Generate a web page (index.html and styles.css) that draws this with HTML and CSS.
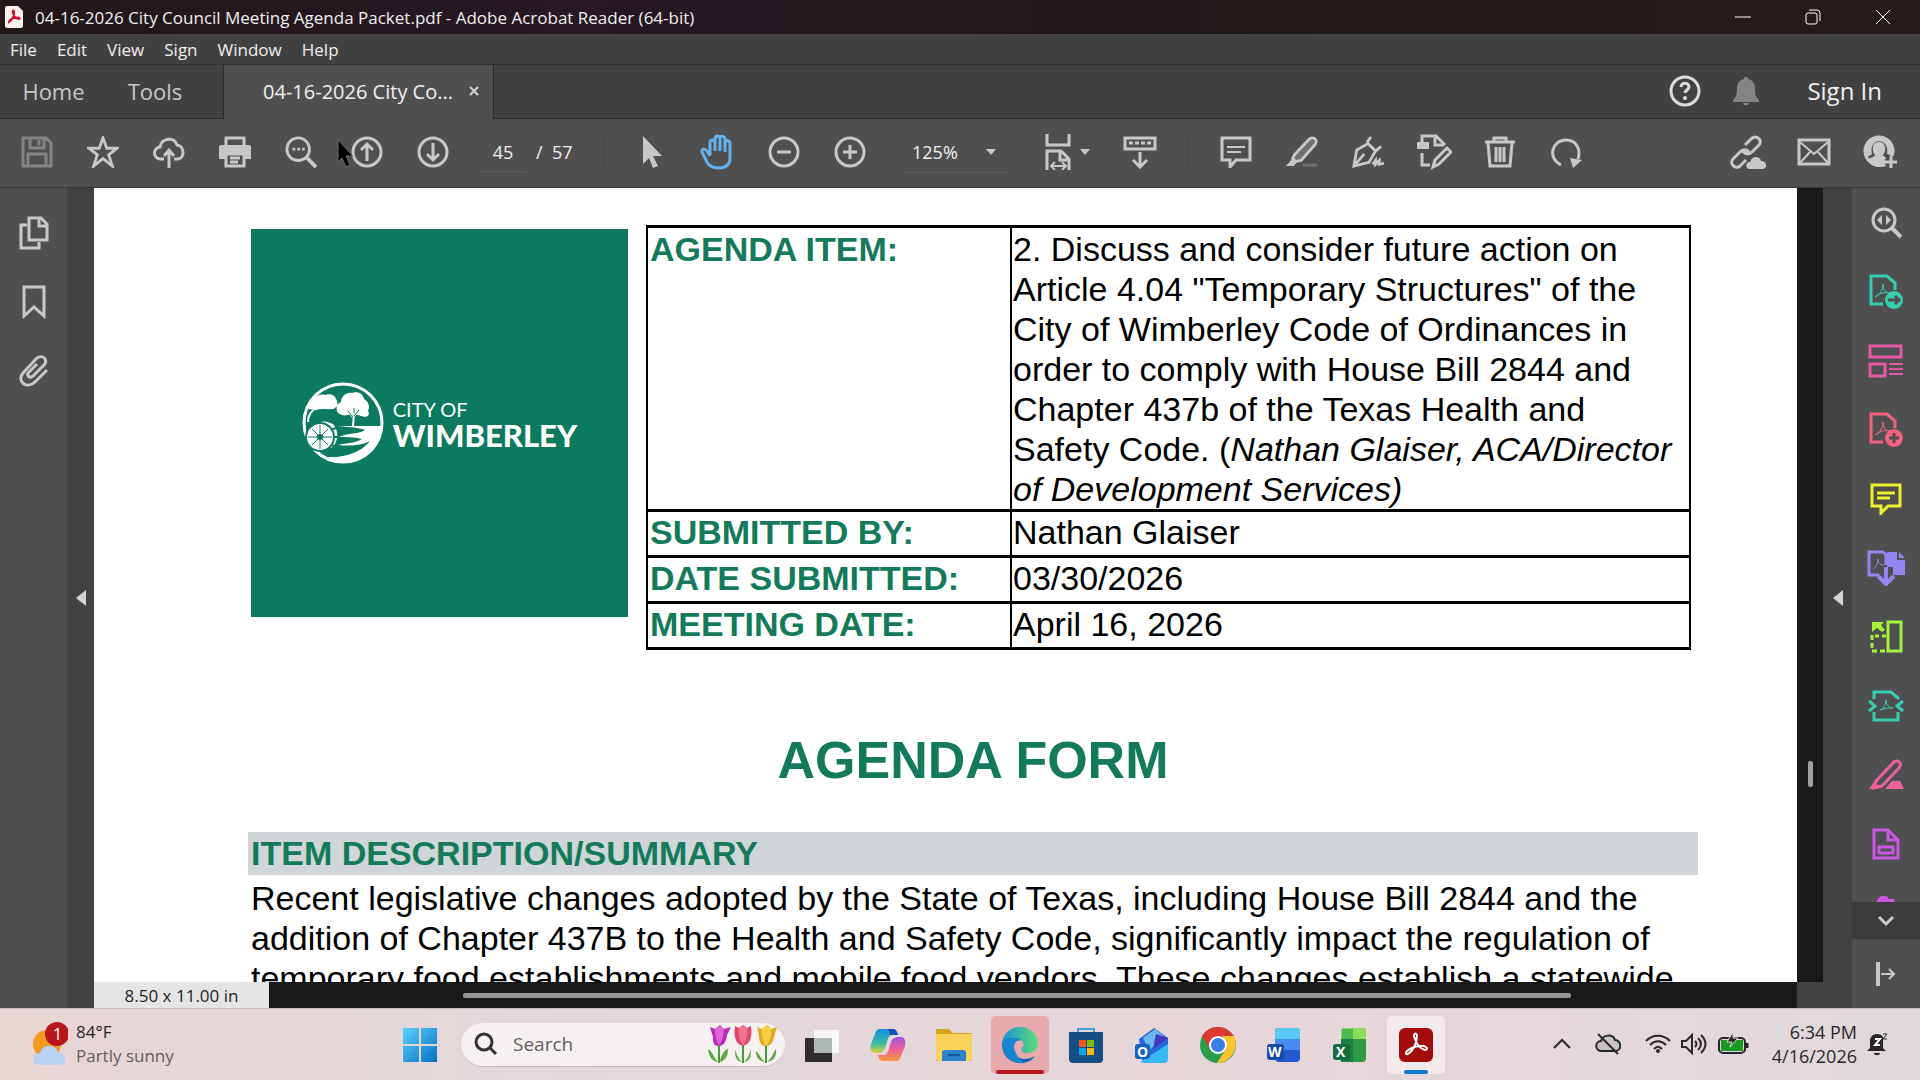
FILE: index.html
```html
<!DOCTYPE html>
<html lang="en">
<head>
    <meta charset="UTF-8">
    <meta name="viewport" content="width=device-width, initial-scale=1.0">
    <title>04-16-2026 City Council Meeting Agenda Packet.pdf - Adobe Acrobat Reader (64-bit)</title>
    <link rel="stylesheet" href="styles.css">
</head>
<body>
    <header class="title-bar">
        <svg class="app-icon" width="18" height="22" viewBox="0 0 18 22"><path d="M2 0h11l5 5v15a2 2 0 0 1-2 2H2a2 2 0 0 1-2-2V2a2 2 0 0 1 2-2z" fill="#fff0f0"/><path d="M4 16c3-2 5-6 5-10 0-2-2-2-1 1 1 4 3 6 6 6 2-1-1-2-4-1-3 0-6 2-6 4z" fill="none" stroke="#c8102e" stroke-width="2"/></svg>
        <span class="window-title">04-16-2026 City Council Meeting Agenda Packet.pdf - Adobe Acrobat Reader (64-bit)</span>
        <div class="window-buttons">
            <button aria-label="Minimize"><svg width="16" height="16" viewBox="0 0 16 16"><path d="M0 8h16"/></svg></button>
            <button aria-label="Restore"><svg width="16" height="16" viewBox="0 0 16 16"><rect x="1" y="4" width="11" height="11" rx="2"/><path d="M4 1h8a3 3 0 0 1 3 3v8"/></svg></button>
            <button aria-label="Close"><svg width="16" height="16" viewBox="0 0 16 16"><path d="M1 1l14 14M15 1L1 15"/></svg></button>
        </div>
    </header>

    <nav class="menu-bar">
        <button>File</button>
        <button>Edit</button>
        <button>View</button>
        <button>Sign</button>
        <button>Window</button>
        <button>Help</button>
    </nav>

    <div class="tab-bar">
        <button class="tab tab-home">Home</button>
        <button class="tab tab-tools">Tools</button>
        <div class="doc-tab">
            <span>04-16-2026 City Co...</span>
            <button aria-label="Close tab"><svg width="10" height="10" viewBox="0 0 10 10"><path d="M1 1l8 8M9 1L1 9" stroke="#d4d3d4" stroke-width="2"/></svg></button>
        </div>
        <div class="account">
            <button aria-label="Help"><svg class="icon" width="32" height="32" viewBox="0 0 32 32"><circle cx="16" cy="16" r="14" stroke-width="3"/><path d="M12 12c0-5 8-5 8 0 0 3-4 3-4 6" stroke-width="3"/><circle cx="16" cy="23" r="2" class="solid"/></svg></button>
            <button aria-label="Notifications"><svg width="26" height="30" viewBox="0 0 26 30"><path d="M11 1h4v2c5 1 7 5 7 10 0 6 1 8 4 11v2H0v-2c3-3 4-5 4-11C4 8 6 4 11 3zM10 27h6c0 3-6 3-6 0z" fill="#858485"/></svg></button>
            <button class="sign-in">Sign In</button>
        </div>
    </div>

    <div class="toolbar">
        <button class="tool dim" aria-label="Save"><svg class="icon" viewBox="0 0 32 32"><path d="M2 2h23l5 5v23H2zM9 2v10h14V2M7 30V18h18v12M18 4v5"/></svg></button>
        <button class="tool" aria-label="Star"><svg class="icon" viewBox="0 0 34 34"><path d="M17 2l4 11h11l-9 7 4 12-10-8-10 8 4-12-9-7h11z"/></svg></button>
        <button class="tool" aria-label="Upload"><svg class="icon" viewBox="0 0 32 32"><path d="M11 23H8A6 6 0 0 1 7 11C8 2 22 0 24 9c8 1 8 14 0 14h-3M16 32V15M11 20l5-6 5 6"/></svg></button>
        <button class="tool" aria-label="Print"><svg class="icon" viewBox="0 0 32 32"><path d="M7 9V2h18v7"/><path d="M2 9h28a2 2 0 0 1 2 2v12h-6v-6H6v6H0V11a2 2 0 0 1 2-2z" class="solid"/><path d="M7 18h18v12H7zM11 22h10M11 26h8"/></svg></button>
        <button class="tool" aria-label="Find"><svg class="icon" viewBox="0 0 34 34"><circle cx="14" cy="14" r="12"/><path d="M23 23l10 10" stroke-width="4"/><path d="M8 14h3M13 14h3M18 14h3"/></svg></button>
        <button class="tool" aria-label="Previous page"><svg class="icon" viewBox="0 0 32 32"><circle cx="16" cy="16" r="14"/><path d="M16 25V9M10 14l6-6 6 6"/></svg></button>
        <button class="tool" aria-label="Next page"><svg class="icon" viewBox="0 0 32 32"><circle cx="16" cy="16" r="14"/><path d="M16 7v16M10 18l6 6 6-6"/></svg></button>
        <div class="page-box">
            <input type="text" value="45" aria-label="Page number">
            <span>/&nbsp; 57</span>
        </div>
        <span class="divider"></span>
        <button class="tool" aria-label="Select"><svg class="icon" viewBox="0 0 32 32"><path d="M7 0l19 20h-9l5 10-5 2-4-10-6 6z" class="solid"/></svg></button>
        <button class="tool active" aria-label="Hand"><svg class="icon" width="36" height="36" viewBox="0 0 36 36"><path d="M10 21V9c0-4 5-4 5 0v8V5c0-4 5-4 5 0v12V5c0-4 5-3 5 0v13-9c0-4 5-3 5 1v14c0 7-5 10-12 10C10 34 7 30 5 24l-3-6c-1-3 3-4 5-1l3 5"/></svg></button>
        <button class="tool" aria-label="Zoom out"><svg class="icon" viewBox="0 0 32 32"><circle cx="16" cy="16" r="14"/><path d="M9 16h14"/></svg></button>
        <button class="tool" aria-label="Zoom in"><svg class="icon" viewBox="0 0 32 32"><circle cx="16" cy="16" r="14"/><path d="M9 16h14M16 9v14"/></svg></button>
        <div class="zoom-box">
            <select aria-label="Zoom level">
                <option>125%</option>
            </select>
        </div>
        <button class="tool fit" aria-label="Fit width"><svg class="icon" width="28" height="36" viewBox="0 0 28 36"><path d="M3 0v11h22V0M3 36V17h14l8 8v11M16 17v9h9"/><path d="M8 32h13M11 28l-4 4 4 4M18 28l4 4-4 4" stroke-width="2"/></svg><span class="caret"></span></button>
        <button class="tool" aria-label="Page display"><svg class="icon" width="34" height="34" viewBox="0 0 34 34"><path d="M2 3h30v11H2zM17 17v14M10 25l7 7 7-7"/><path d="M6 8h4M12 8h4M18 8h4M24 8h4"/></svg></button>
        <span class="divider"></span>
        <button class="tool" aria-label="Comment"><svg class="icon" viewBox="0 0 32 32"><path d="M2 2h28v22H16l-6 7v-7H2z"/><path d="M7 11h18M7 16h14" stroke-width="2"/></svg></button>
        <button class="tool" aria-label="Highlight"><svg class="icon" viewBox="0 0 34 34"><path d="M9 20L24 4c4-5 11 0 7 5L16 26l-6 1-3-3z" fill="#717071"/><path d="M0 32l6-7 5 4-3 3z" class="solid"/><path d="M18 31h15" stroke="#717071"/></svg></button>
        <button class="tool" aria-label="Sign"><svg class="icon" viewBox="0 0 34 34"><path d="M2 32l3-17 12-7 8 8-7 12zM2 32l11-13M16 7l4-6M25 16l6-5M22 30l3-4v4l4-4v4l5-1"/></svg></button>
        <button class="tool" aria-label="Edit"><svg class="icon" width="36" height="36" viewBox="0 0 36 36"><path d="M6 8V2h14l9 9M19 2v9h9M6 19v12h8"/><path d="M1 8h12v7H1z" class="solid"/><path d="M17 33l2-7 12-12 4 4-12 12z"/></svg></button>
        <button class="tool" aria-label="Delete"><svg class="icon" viewBox="0 0 32 32"><path d="M1 6h30M10 6V2h12v4M4 7l2 23h20l2-23M12 11v15M16 11v15M20 11v15"/></svg></button>
        <button class="tool" aria-label="Rotate"><svg class="icon" viewBox="0 0 32 32"><path d="M11 29C-3 22 2 4 16 4c11 0 15 10 12 19"/><path d="M20 22l12 2-9 8z" class="solid"/></svg></button>
        <div class="share-tools">
            <button class="tool" aria-label="Share link"><svg class="icon" width="36" height="34" viewBox="0 0 36 34"><path d="M15 10l6-6c6-5 12 2 8 6l-7 7c-4 4-9 1-9-2M19 19c0-4-5-6-9-2l-7 7c-4 4 2 11 7 7l6-6"/><path d="M20 34c-5 0-5-7 0-7 2-7 10-6 11-1 7 0 6 8 2 8z" class="solid"/></svg></button>
            <button class="tool" aria-label="Email"><svg class="icon" width="34" height="28" viewBox="0 0 34 28"><path d="M2 2h30v24H2z"/><path d="M3 4l14 12L31 4M3 25l10-11M31 25L21 14" stroke-width="2"/></svg></button>
            <button class="tool" aria-label="Add person"><svg class="icon" width="34" height="34" viewBox="0 0 34 34"><circle cx="16" cy="16" r="14"/><path d="M4 25c2-3 7-2 8-5-3-3-4-13 4-13s7 10 4 13c1 2 3 2 3 3v8C17 33 9 33 4 25zM2 16C2-3 30-3 30 16l-1 5-5-2C27 2 5 2 9 19l-6 4z" class="solid"/><path d="M28 21v12M22 27h12" stroke="#504f50" stroke-width="6"/><path d="M28 21v12M22 27h12"/></svg></button>
        </div>
    </div>

    <main class="workspace">
        <nav class="left-rail">
            <button class="rail-btn" aria-label="Page thumbnails"><svg class="icon" width="30" height="34" viewBox="0 0 30 34"><path d="M10 2h12l6 6v16H10zM20 2v8h8M8 9H2v23h18v-6"/></svg></button>
            <button class="rail-btn" aria-label="Bookmarks"><svg class="icon" width="24" height="34" viewBox="0 0 24 34"><path d="M2 2h20v29l-10-9-10 9z"/></svg></button>
            <button class="rail-btn" aria-label="Attachments"><svg class="icon" width="30" height="32" viewBox="0 0 30 32"><path d="M28 15L16 27C8 35-3 26 4 18L17 4c6-6 13 1 8 6L14 21c-4 3-7-1-4-4l8-8"/></svg></button>
        </nav>
        <button class="collapse" aria-label="Expand navigation pane"><span class="arrow-left"></span></button>

        <section class="viewer">
            <div class="page">
                <div class="page-head">
                    <div class="city-logo">
                        <svg width="82" height="82" viewBox="0 0 82 82">
                            <circle cx="41" cy="41" r="39" fill="none" stroke="#fff" stroke-width="3"/>
                            <path d="M7 25c3-8 9-14 16-12 5-2 10 0 11 4 3 4 1 9-3 10-7 1-12-1-17 1l-8-1zM36 31c-3-6-1-9 3-11 0-6 6-10 11-9 6-2 11 1 12 6 5 3 6 8 4 12 3 5-2 7-7 5-5-2-8-2-13-1-4 1-7 0-10-2z" fill="#fff"/>
                            <path d="M51 44l1-13M51 35l-5-6M52 34l5-6M51 30v-5M6 40c0-7 3-11 8-14" fill="none" stroke="#fff" stroke-width="2"/>
                            <path d="M51 35l-5-6M52 34l5-6M52 31v-5" fill="none" stroke="#0c7a5e" stroke-width="1"/>
                            <path d="M36 44h44c0 19-14 34-32 36-8 2-17 1-24-5 17 1 35-4 44-16-10 5-20 5-32 4 9-2 18-2 24-6-8-2-16-2-23-2 8-4 21-3 26-7-8-3-18-3-27-4z" fill="#fff"/>
                            <path d="M14 43c5-5 12-4 18 0 5 8 4 15-1 22l-15 4z" fill="#fff"/>
                            <circle cx="18" cy="55" r="14" fill="#fff" stroke="#0c7a5e" stroke-width="2"/>
                            <path d="M18 43v24M6 55h24M10 47l16 16M10 63l16-16" stroke="#0c7a5e" stroke-width="1"/>
                            <circle cx="18" cy="55" r="3" fill="#0c7a5e"/>
                            <path d="M29 48l5-2M32 55h5M29 63l6 2" stroke="#0c7a5e" stroke-width="2"/>
                        </svg>
                        <div class="city-name">
                            <span>CITY OF</span>
                            <strong>WIMBERLEY</strong>
                        </div>
                    </div>
                    <table class="agenda-table">
                        <tr class="agenda-row">
                            <th>AGENDA ITEM:</th>
                            <td>2. Discuss and consider future action on<br>Article 4.04 "Temporary Structures" of the<br>City of Wimberley Code of Ordinances in<br>order to comply with House Bill 2844 and<br>Chapter 437b of the Texas Health and<br>Safety Code. (<i>Nathan Glaiser, ACA/Director<br>of Development Services)</i></td>
                        </tr>
                        <tr><th>SUBMITTED BY:</th><td>Nathan Glaiser</td></tr>
                        <tr><th>DATE SUBMITTED:</th><td>03/30/2026</td></tr>
                        <tr><th>MEETING DATE:</th><td>April 16, 2026</td></tr>
                    </table>
                </div>
                <h1>AGENDA FORM</h1>
                <h2>ITEM DESCRIPTION/SUMMARY</h2>
                <p>Recent legislative changes adopted by the State of Texas, including House Bill 2844 and the<br>addition of Chapter 437B to the Health and Safety Code, significantly impact the regulation of<br>temporary food establishments and mobile food vendors. These changes establish a statewide</p>
            </div>
            <div class="v-scroll"><div class="v-thumb"></div></div>
            <div class="page-foot">
                <span class="page-size">8.50 x 11.00 in</span>
                <div class="h-scroll"><div class="h-thumb"></div></div>
            </div>
            <div class="corner"></div>
        </section>

        <button class="collapse right" aria-label="Expand tools pane"><span class="arrow-left"></span></button>
        <nav class="right-rail">
            <div class="rail-list">
                <button class="rail-btn" aria-label="Search tools"><svg class="icon" width="32" height="32" viewBox="0 0 32 32"><circle cx="14" cy="13" r="11"/><path d="M22 21l9 9" stroke-width="4"/><path d="M12 8v10l-5-5zM16 8v10l5-5z" class="solid"/></svg></button>
                <button class="rail-btn teal" aria-label="Export PDF"><svg class="icon" width="34" height="36" viewBox="0 0 34 36"><path d="M14 30H2V2h16l8 7v7"/><path d="M6 23c6-3 8-8 8-13 0 6 3 9 7 9-6-1-10 0-15 4" stroke-width="1"/><circle cx="25" cy="26" r="9" class="solid"/><path d="M19 26h11M26 22l4 4-4 4" class="cut"/></svg></button>
                <button class="rail-btn pink" aria-label="Organize pages"><svg class="icon" width="36" height="34" viewBox="0 0 36 34"><path d="M2 2h31v11H2zM2 20h15v12H2z"/><path d="M21 20h14M21 25h14M21 30h14" stroke-width="2"/></svg></button>
                <button class="rail-btn coral" aria-label="Create PDF"><svg class="icon" width="34" height="36" viewBox="0 0 34 36"><path d="M14 30H2V2h16l8 7v7"/><path d="M6 23c6-3 8-8 8-13 0 6 3 9 7 9-6-1-10 0-15 4" stroke-width="1"/><circle cx="25" cy="26" r="9" class="solid"/><path d="M20 26h10M25 21v10" class="cut"/></svg></button>
                <button class="rail-btn yellow" aria-label="Comment tool"><svg class="icon" width="32" height="32" viewBox="0 0 32 32"><path d="M2 2h28v21H18l-7 7v-7H2z"/><path d="M7 10h18M7 15h13"/></svg></button>
                <button class="rail-btn violet" aria-label="Combine files"><svg class="icon" width="38" height="36" viewBox="0 0 38 36"><path d="M12 25H2V2h14l3 3v10"/><path d="M6 19c4-3 5-6 5-10 0 4 2 6 6 6" stroke-width="1"/><path d="M20 2h10v8h8v15H26v-8h-6z" class="solid"/><path d="M32 2l6 6h-6z" class="solid"/><path d="M19 17v15M11 26l8 8 8-8" stroke-width="4"/></svg></button>
                <button class="rail-btn lime" aria-label="Edit layout"><svg class="icon" width="34" height="34" viewBox="0 0 34 34"><path d="M19 2h13v29H19z"/><path d="M3 15v16h14" stroke-dasharray="5 3"/><path d="M6 16h11" stroke-dasharray="4 3"/><path d="M3 2h12l-3 3 4 5-3 2-5-4-5 4z" class="solid"/></svg></button>
                <button class="rail-btn teal" aria-label="Compress PDF"><svg class="icon" width="36" height="32" viewBox="0 0 36 32"><path d="M6 9V2h17l8 7M6 22v8h24v-8M1 11l6 5-6 5M35 11l-6 5 6 5"/><path d="M12 20c4-2 6-6 6-10 0 5 3 8 7 8-5 0-9 0-13 2z" stroke-width="1"/></svg></button>
                <button class="rail-btn rose" aria-label="Redact"><svg class="icon" width="36" height="32" viewBox="0 0 36 32"><path d="M8 22L25 4c4-5 10 0 6 5L14 27l-8 2z"/><path d="M1 30l5-7 6 5-3 2zM17 30l7-8h8l4 8z" class="solid"/></svg></button>
                <button class="rail-btn purple" aria-label="Prepare form"><svg class="icon" width="28" height="32" viewBox="0 0 28 32"><path d="M2 2h14l10 10v18H2zM16 2v10h10M7 19h14v6H7z"/></svg></button>
                <button class="rail-btn purple" aria-label="More tool"><svg class="icon" width="20" height="34" viewBox="0 0 20 34"><path d="M0 8c1-8 9-12 13-5h5l2 11H0z" class="solid"/></svg></button>
            </div>
            <button class="rail-more" aria-label="Show more tools"><svg class="icon" width="18" height="12" viewBox="0 0 18 12"><path d="M2 2l7 7 7-7"/></svg></button>
            <button class="rail-btn" aria-label="Open tools pane"><svg class="icon" width="20" height="26" viewBox="0 0 20 26"><path d="M2 1v24" stroke-width="4"/><path d="M5 13h13M13 8l5 5-5 5" stroke-width="2"/></svg></button>
        </nav>
    </main>

    <footer class="taskbar">
        <button class="weather">
            <svg width="36" height="44" viewBox="0 0 36 44"><circle cx="15" cy="22" r="14" fill="#f39a20"/><path d="M8 43c-9 0-9-12 0-12 2-10 17-9 18 0 10 0 10 12 0 12z" fill="#b9d1f2"/><circle cx="25" cy="12" r="12" fill="#b9151d"/><text x="21" y="18" fill="#fff" font-size="16">1</text></svg>
            <span class="forecast"><span>84°F</span><span class="sky">Partly sunny</span></span>
        </button>

        <div class="apps">
            <button class="app start" aria-label="Start"><svg width="36" height="36" viewBox="0 0 36 36"><defs><linearGradient id="win" x1="0" y1="0" x2="1" y2="1"><stop stop-color="#5bd0fa"/><stop offset="1" stop-color="#0670c6"/></linearGradient></defs><path d="M1 1h16v16H1zM19 1h16v16H19zM1 19h16v16H1zM19 19h16v16H19z" fill="url(#win)"/></svg></button>
            <label class="search">
                <svg width="24" height="24" viewBox="0 0 24 24"><circle cx="10" cy="10" r="8" fill="none" stroke="#333" stroke-width="3"/><path d="M16 16l6 6" stroke="#333" stroke-width="3"/></svg>
                <input type="text" placeholder="Search" aria-label="Search">
                <svg width="72" height="40" viewBox="0 0 72 40">
                    <path d="M12 20v19M36 20v19M59 20v19" stroke="#459c38" stroke-width="2"/>
                    <path d="M11 38C7 34 6 28 1 25c1 7 3 12 10 13zM13 38c1-7 4-12 8-13 0 7-2 11-8 13zM35 38c-5-4-5-9-7-12 0 7 1 11 7 12zM37 38c5-4 5-9 7-12 0 7-1 11-7 12zM58 38c-5-4-6-9-9-11 0 7 3 10 9 11zM60 38c5-4 6-9 9-13 1 7-2 12-9 13z" fill="#5cab42"/>
                    <path d="M3 3l5 2 5-4 4 4 7-2-4 8c-1 7-3 11-9 11-5 0-5-5-5-9z" fill="#b82bb9"/><path d="M8 5c0 6 1 12 4 17 3-5 5-11 5-17l-4-4z" fill="#dd62d5"/>
                    <path d="M28 2l4 2 4-3 4 3 4-2c1 7 1 18-8 20-9-2-9-13-8-20z" fill="#e0486b"/><path d="M32 4c-1 7 1 13 4 18 3-5 5-11 4-18l-4-3z" fill="#f2758b"/>
                    <path d="M50 3l5 2 5-4 4 4 6-2-3 10c-1 6-4 9-8 9-5 0-7-4-7-10z" fill="#e2aa20"/><path d="M55 5c-1 7 1 12 4 17 4-5 6-11 5-17l-4-4z" fill="#f7cd4a"/>
                </svg>
            </label>
            <button class="app" aria-label="Task view"><svg width="36" height="36" viewBox="0 0 36 36"><path d="M1 11h27v24H1z" fill="#302d2d"/><path d="M10 3h25v23H10z" fill="#f8f7f6"/><path d="M10 11h18v15H10z" fill="#aeb7b3"/></svg></button>
            <button class="app" aria-label="Copilot"><svg width="36" height="36" viewBox="0 0 36 36"><defs><linearGradient id="cop-a" x1="0" y1="0" x2="0" y2="1"><stop stop-color="#178de8"/><stop offset=".6" stop-color="#38bba3"/><stop offset="1" stop-color="#e2d33b"/></linearGradient><linearGradient id="cop-b" x1="0" y1="0" x2="0" y2="1"><stop stop-color="#9b57e9"/><stop offset=".5" stop-color="#ef5b98"/><stop offset="1" stop-color="#f79a38"/></linearGradient></defs><path d="M10 2h13c3 0 4 3 5 6h-6c-3 0-4 3-5 7l-2 6c-2 5-5 5-10 5-4 0-5-4-4-9L5 7c1-4 3-5 5-5z" fill="url(#cop-a)"/><path d="M26 34H13c-3 0-4-3-5-6h6c3 0 4-3 5-7l2-6c2-5 5-5 10-5 4 0 5 4 4 9l-4 10c-1 4-3 5-5 5z" fill="url(#cop-b)"/><path d="M18 2h5c3 0 4 3 5 6h-8z" fill="#1653b4"/></svg></button>
            <button class="app" aria-label="File Explorer"><svg width="38" height="36" viewBox="0 0 38 36"><path d="M1 2h13l4 4h19v28H1z" fill="#d6a51e"/><path d="M1 7h36v25a2 2 0 0 1-2 2H3a2 2 0 0 1-2-2z" fill="#fad35b"/><path d="M7 34V26a3 3 0 0 1 3-3h18a3 3 0 0 1 3 3v8z" fill="#2a82cd"/><path d="M13 28h12" stroke="#145897" stroke-width="2"/></svg></button>
            <button class="app alert" aria-label="Edge"><svg width="38" height="38" viewBox="0 0 38 38"><defs><linearGradient id="edge-a" x1="0" y1="0" x2="1" y2="0"><stop stop-color="#168fd0"/><stop offset="1" stop-color="#5bdf78"/></linearGradient></defs><path d="M1 18C2 7 10 1 19 1c11 0 18 8 18 16 0 7-6 10-11 10-6 0-7-3-4-6 2-4-1-8-7-8-6-1-11 1-14 5z" fill="url(#edge-a)"/><path d="M1 18c4-7 14-7 19-4-8-1-11 9-6 15 5 5 13 5 20 1-8 12-33 9-33-12z" fill="#0b62ae"/><path d="M1 18c4-7 14-7 19-4-7 0-9 8-5 13 2 5 5 8 9 10C10 39 1 29 1 18z" fill="#1785cf"/></svg></button>
            <button class="app" aria-label="Microsoft Store"><svg width="36" height="36" viewBox="0 0 36 36"><path d="M10 6V2h16v4" fill="none" stroke="#3aa3df" stroke-width="2"/><path d="M1 5h34v27a4 4 0 0 1-4 4H5a4 4 0 0 1-4-4z" fill="#164d82"/><path d="M11 13h7v7h-7z" fill="#f35325"/><path d="M19 13h7v7h-7z" fill="#81bc06"/><path d="M11 21h7v7h-7z" fill="#05a6f0"/><path d="M19 21h7v7h-7z" fill="#ffba08"/></svg></button>
            <button class="app" aria-label="Outlook"><svg width="36" height="36" viewBox="0 0 36 36"><path d="M5 12L20 1l14 10v22H8z" fill="#2468dc"/><path d="M9 11L21 2l11 9-17 12z" fill="#69b7f5"/><path d="M22 7l12 4-15 11z" fill="#4537bd"/><path d="M6 35l28-18v15a4 4 0 0 1-4 4H10z" fill="#38b9f3"/><rect x="1" y="17" width="15" height="15" rx="3" fill="#1463bf"/><text x="3" y="30" class="app-letter">O</text></svg></button>
            <button class="app" aria-label="Chrome"><svg width="38" height="38" viewBox="0 0 38 38"><circle cx="19" cy="19" r="18" fill="#2d9c4d"/><path d="M19 1c7 0 13 4 16 10H19l-8 12L3 10C7 4 12 1 19 1z" fill="#db3a32"/><path d="M35 10c6 13-4 27-17 27l9-14c2-4 0-8-4-13z" fill="#f8c52e"/><circle cx="19" cy="19" r="9" fill="#fff"/><circle cx="19" cy="19" r="7" fill="#397ee6"/></svg></button>
            <button class="app" aria-label="Word"><svg width="36" height="36" viewBox="0 0 36 36"><rect x="9" y="1" width="25" height="34" rx="4" fill="#2459d2"/><path d="M9 12V5a4 4 0 0 1 4-4h17a4 4 0 0 1 4 4v7z" fill="#58c8f6"/><path d="M9 12h25v11H9z" fill="#478cf0"/><rect x="1" y="17" width="17" height="16" rx="3" fill="#174ba6"/><text x="2" y="30" class="app-letter">W</text></svg></button>
            <button class="app" aria-label="Excel"><svg width="36" height="36" viewBox="0 0 36 36"><rect x="9" y="1" width="25" height="34" rx="4" fill="#2e9843"/><path d="M9 12V5a4 4 0 0 1 4-4h17a4 4 0 0 1 4 4v7z" fill="#8bdc58"/><path d="M9 12h12v23H9z" fill="#198047"/><path d="M10 2h11v10H10z" fill="#48b850"/><rect x="1" y="17" width="17" height="16" rx="3" fill="#126c3d"/><text x="4" y="30" class="app-letter">X</text></svg></button>
            <button class="app current" aria-label="Acrobat Reader"><svg width="34" height="34" viewBox="0 0 34 34"><rect width="34" height="34" rx="6" fill="#a30b0c"/><path d="M9 26c5-3 9-11 9-18 0-4-5-3-2 3 2 6 6 10 10 11 5-1 0-5-5-4-5 0-11 3-13 5-2 2-1 4 1 3z" fill="none" stroke="#fff" stroke-width="2"/></svg></button>
        </div>

        <div class="tray">
            <button aria-label="Show hidden icons"><svg width="18" height="12" viewBox="0 0 18 12"><path d="M1 10l8-8 8 8"/></svg></button>
            <button aria-label="OneDrive"><svg width="26" height="22" viewBox="0 0 26 22"><path d="M7 18C-1 18 0 8 6 8c2-7 12-7 14-1 7 1 7 11 0 11z" fill="#c7c2c4"/><path d="M3 1l20 20"/></svg></button>
            <button aria-label="Network"><svg width="26" height="20" viewBox="0 0 26 20"><path d="M1 7C8 0 18 0 25 7M5 11c5-5 11-5 16 0M9 15c3-3 5-3 8 0"/><circle cx="13" cy="17" r="2" fill="#29262a" stroke="none"/></svg></button>
            <button aria-label="Volume"><svg width="26" height="22" viewBox="0 0 26 22"><path d="M1 8h4l6-6v18l-6-6H1zM14 8c2 2 2 4 0 6M17 5c4 4 4 8 0 12M20 2c6 6 6 12 0 18"/></svg></button>
            <button aria-label="Battery"><svg width="32" height="24" viewBox="0 0 32 24"><rect x="2" y="6" width="26" height="15" rx="4"/><path d="M30 11v5" stroke-width="3"/><path d="M4 8h22v11H4z" fill="#1a9a22" stroke="none"/><path d="M16 0l-6 10h5l-2 5 8-9h-5z" fill="#29262a" stroke="#dfd7da" stroke-width="1"/></svg></button>
            <button class="clock"><span>6:34 PM</span><span>4/16/2026</span></button>
            <button aria-label="Notifications"><svg width="22" height="24" viewBox="0 0 22 24"><path d="M3 16V9c0-8 10-9 13-4v11l3 3H0zM7 21h6c0 3-6 3-6 0z" fill="#29262a" stroke="none"/><path d="M8 7h5l-5 6h5" stroke="#fff"/><path d="M16 2h4l-4 5h4" stroke-width="1"/></svg></button>
        </div>
    </footer>

    <svg class="pointer" width="18" height="30" viewBox="0 0 18 30"><path d="M1 1l15 16h-7l4 9-4 2-4-9-4 4z" fill="#000" stroke="#6d6c6d" stroke-width="1"/></svg>
</body>
</html>
```
FILE: styles.css
```css
* {
    box-sizing: border-box;
}
body {
    margin: 0;
    height: 100vh;
    display: flex;
    flex-direction: column;
    overflow: hidden;
    background: #504f50;
    color: #f0eff0;
    font-family: "Open Sans", "Noto Sans", sans-serif;
    font-size: 17px;
}
button, input, select {
    margin: 0;
    padding: 0;
    border: 0;
    background: none;
    color: inherit;
    font: inherit;
}
svg {
    display: block;
    flex: none;
}

/* Title and menu */
.title-bar {
    flex: none;
    display: flex;
    align-items: center;
    height: 34px;
    padding: 0 2px 0 5px;
    background: linear-gradient(90deg, #211819, #271823 30%, #211819 60%, #251c1a);
}
.window-title {
    margin-left: 12px;
    white-space: nowrap;
}
.window-buttons {
    display: flex;
    height: 100%;
    margin-left: auto;
}
.window-buttons button {
    display: grid;
    place-items: center;
    width: 70px;
}
.window-buttons svg {
    fill: none;
    stroke: #fff;
    stroke-width: 1;
}
.menu-bar {
    flex: none;
    display: flex;
    align-items: center;
    gap: 20px;
    height: 31px;
    padding-left: 10px;
    background: #424142;
    border-bottom: 1px solid #323132;
}

/* Tabs */
.tab-bar {
    flex: none;
    display: flex;
    height: 54px;
    background: #424142;
}
.tab {
    padding-bottom: 2px;
    font-size: 22px;
    color: #c9c8c9;
    border-bottom: 1px solid #2c2b2c;
}
.tab-home {
    width: 107px;
}
.tab-tools {
    width: 116px;
    padding-right: 20px;
}
.doc-tab {
    display: flex;
    align-items: center;
    justify-content: flex-end;
    gap: 16px;
    width: 271px;
    padding: 0 14px 2px 0;
    background: #504f50;
    border: solid #2c2b2c;
    border-width: 0 1px;
    font-size: 20px;
}
.account {
    flex: 1;
    display: flex;
    align-items: center;
    justify-content: flex-end;
    gap: 32px;
    padding: 0 38px 2px 0;
    border-bottom: 1px solid #2c2b2c;
    color: #dddcdd;
}
.sign-in {
    margin-left: 16px;
    font-size: 24px;
    font-weight: 500;
    color: #f0eff0;
}

/* Toolbar */
.toolbar {
    flex: none;
    display: flex;
    align-items: center;
    height: 69px;
    padding: 0 7px 2px 4px;
    border-bottom: 1px solid #3b3a3b;
}
.icon {
    fill: none;
    stroke: currentColor;
    stroke-width: 3;
}
.icon .solid {
    fill: currentColor;
    stroke: none;
}
.icon .cut {
    stroke: #504f50;
}
.tool {
    flex: none;
    display: flex;
    align-items: center;
    justify-content: center;
    width: 66px;
    height: 66px;
    color: #c9c8c9;
}
.tool .icon:not([width]) {
    width: 32px;
    height: 32px;
}
.dim {
    color: #858485;
}
.active {
    color: #64b1ee;
}
.page-box {
    display: flex;
    align-items: center;
    gap: 9px;
    width: 138px;
    padding-left: 13px;
    font-size: 18px;
}
.page-box input {
    width: 48px;
    height: 40px;
    text-align: center;
    border-bottom: 1px solid #5c5b5c;
}
.divider {
    width: 1px;
    height: 40px;
    margin-right: 14px;
    background: #474647;
}
.zoom-box {
    display: flex;
    width: 143px;
    padding-left: 20px;
}
.zoom-box select {
    appearance: none;
    width: 105px;
    height: 42px;
    padding-left: 9px;
    border-bottom: 1px solid #5c5b5c;
    font-size: 18px;
}
.zoom-box::after {
    content: "";
    align-self: center;
    margin-left: -22px;
    border: 5px solid transparent;
    border-top: 6px solid #c9c8c9;
    border-bottom: 0;
}
.caret {
    border: 5px solid transparent;
    border-top: 6px solid #c9c8c9;
    border-bottom: 0;
}
.fit {
    width: 81px;
    gap: 8px;
}
.tool + .divider {
    margin-left: 15px;
}
.share-tools {
    display: flex;
    margin-left: auto;
}

/* Workspace */
.workspace {
    flex: 1;
    display: flex;
    min-height: 0;
}
.left-rail {
    width: 67px;
    padding-top: 10px;
}
.rail-btn {
    flex: none;
    display: grid;
    place-items: center;
    width: 100%;
    height: 69px;
    color: #c9c8c9;
}
.collapse {
    display: grid;
    place-items: center;
    width: 27px;
    background: #434143;
}
.collapse.right {
    width: 29px;
}
.arrow-left {
    border: 8px solid transparent;
    border-right: 10px solid #d4d3d4;
    border-left: 0;
}
.viewer {
    flex: 1;
    display: grid;
    grid-template-columns: 1fr 26px;
    grid-template-rows: 1fr 26px;
    min-width: 0;
}
.page {
    overflow: hidden;
    min-height: 0;
    padding: 37px 99px 0 154px;
    background: #fff;
    color: #000;
    font-family: "Liberation Sans", Arial, sans-serif;
    font-size: 34px;
    line-height: 40px;
}
.page-head {
    display: flex;
    align-items: flex-start;
    gap: 18px;
    padding: 0 7px 0 3px;
}
.city-logo {
    display: flex;
    align-items: center;
    justify-content: center;
    gap: 9px;
    width: 377px;
    height: 388px;
    margin-top: 4px;
    background: #0c7a5e;
    color: #fff;
}
.city-name {
    font-family: Lato, sans-serif;
}
.city-name span,
.city-name strong {
    display: block;
    font-size: 20px;
    line-height: 24px;
}
.city-name strong {
    font-size: 31px;
    font-weight: 900;
    line-height: 28px;
}
.agenda-table {
    flex: 1;
    border-collapse: collapse;
}
.agenda-table th,
.agenda-table td {
    height: 46px;
    padding: 0 0 0 2px;
    border: solid #000;
    border-width: 3px 2px;
    text-align: left;
    vertical-align: top;
    white-space: nowrap;
}
.agenda-table td {
    padding-left: 1px;
}
.agenda-table th {
    width: 364px;
    color: #147a5c;
}
.agenda-table .agenda-row th,
.agenda-table .agenda-row td {
    height: 283px;
    padding-top: 1px;
}
.page h1 {
    margin: 80px 0 42px;
    color: #147a5c;
    font-size: 52px;
    line-height: 60px;
    text-align: center;
}
.page h2 {
    margin: 0;
    padding-left: 3px;
    background: #d0d6d7;
    color: #147a5c;
    font-size: 34px;
    line-height: 43px;
}
.page p {
    margin: 3px 0 0;
    padding-left: 3px;
    white-space: nowrap;
}
.v-scroll {
    padding: 573px 10px 0 11px;
    background: #19181a;
}
.v-thumb {
    height: 26px;
    border-radius: 2px;
    background: #a09fa0;
}
.page-foot {
    display: flex;
    background: #19181a;
}
.page-size {
    width: 175px;
    background: #e6e5e6;
    color: #222;
    line-height: 28px;
    text-align: center;
}
.h-scroll {
    flex: 1;
    padding: 11px 226px 0 194px;
}
.h-thumb {
    height: 5px;
    border-radius: 2px;
    background: #979697;
}
.corner {
    background: #434243;
}
.right-rail {
    display: flex;
    flex-direction: column;
    width: 68px;
}
.rail-list {
    flex: 1;
    overflow: hidden;
}
.rail-more {
    display: grid;
    place-items: center;
    height: 37px;
    background: #3d3c3d;
    color: #c9c8c9;
}
.teal { color: #35cfb0; }
.pink { color: #e259a5; }
.coral { color: #f3637e; }
.yellow { color: #eef02e; }
.violet { color: #9385f2; }
.lime { color: #a5f43c; }
.rose { color: #f0609c; }
.purple { color: #cc55e6; }

/* Taskbar */
.taskbar {
    flex: none;
    display: flex;
    align-items: center;
    height: 72px;
    background: linear-gradient(90deg, #e8d5d4, #e2d8da 30%, #e7d5d8 60%, #e6d6da 75%, #dfd9dc);
    border-top: 1px solid #c9bec1;
    color: #29262a;
}
.weather {
    display: flex;
    align-items: center;
    gap: 8px;
    width: 391px;
    padding: 0 0 2px 32px;
    text-align: left;
}
.forecast span {
    display: block;
    line-height: 24px;
}
.forecast .sky {
    color: #635c5f;
}
.apps {
    display: flex;
    align-items: center;
    gap: 8px;
}
.app {
    display: grid;
    place-items: center;
    position: relative;
    width: 58px;
    height: 58px;
    border-radius: 5px;
}
.start {
    margin-right: 4px;
}
.alert {
    background: #e6a9ac;
}
.current {
    background: #f4e9ec;
}
/* Running marks sit over the bottom edge of the app buttons */
.alert::after,
.current::after {
    content: "";
    position: absolute;
    bottom: 0;
    width: 48px;
    height: 4px;
    border-radius: 2px;
    background: #b9151d;
}
.current::after {
    width: 24px;
    background: #0c7bcb;
}
.app-letter {
    fill: #fff;
    font-size: 14px;
    font-weight: 700;
}
.search {
    display: flex;
    align-items: center;
    width: 324px;
    height: 44px;
    padding: 0 6px 0 13px;
    border-radius: 22px;
    background: #f6f0f1;
    border-bottom: 1px solid #c4b9bb;
}
.search input {
    flex: 1;
    min-width: 0;
    padding-left: 15px;
    font-size: 19px;
}
.search input::placeholder {
    color: #635c5f;
    opacity: 1;
}
.tray {
    display: flex;
    align-items: center;
    margin-left: auto;
    padding: 0 31px 2px 0;
}
.tray svg {
    fill: none;
    stroke: #29262a;
    stroke-width: 2;
}
.tray button {
    margin-left: 10px;
}
.tray button:nth-child(2),
.tray button:nth-child(3) {
    margin-left: 24px;
}
.tray .clock {
    width: 98px;
    font-size: 18px;
    text-align: right;
}
.clock span {
    display: block;
    line-height: 24px;
}

/* Mouse pointer over the toolbar */
.pointer {
    position: absolute;
    left: 337px;
    top: 139px;
}
```
